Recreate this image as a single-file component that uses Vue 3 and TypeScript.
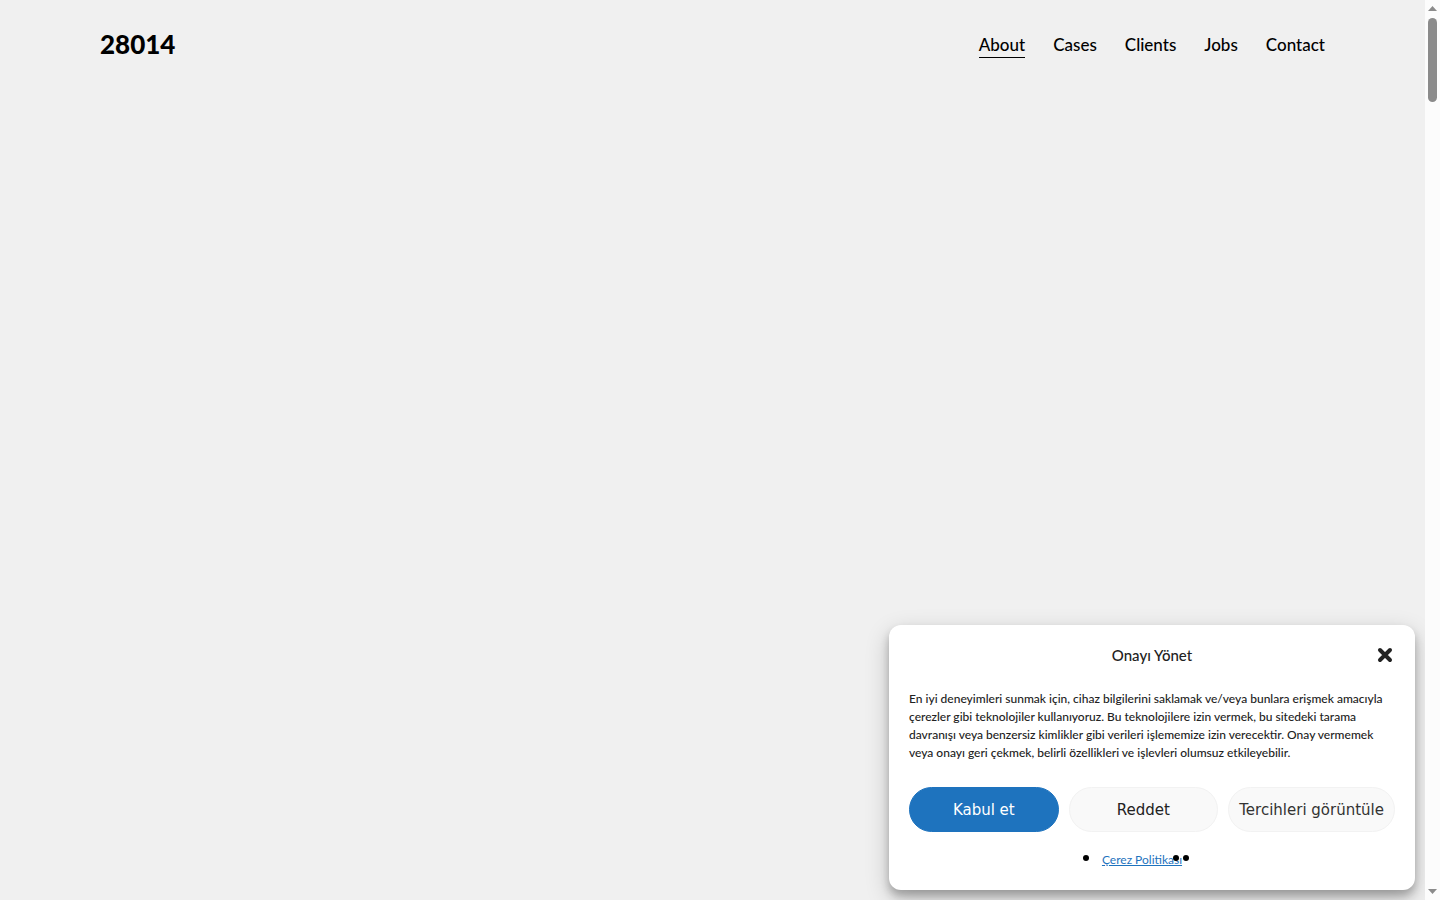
<script setup lang="ts">
import { ref } from 'vue'

interface NavItem {
  label: string
  href: string
}

const navItems: NavItem[] = [
  { label: 'About', href: '#about' },
  { label: 'Cases', href: '#cases' },
  { label: 'Clients', href: '#clients' },
  { label: 'Jobs', href: '#jobs' },
  { label: 'Contact', href: '#contact' },
]

const active = ref('About')
const consentOpen = ref(true)

const messageLines: string[] = [
  'En iyi deneyimleri sunmak için, cihaz bilgilerini saklamak ve/veya bunlara erişmek amacıyla',
  'çerezler gibi teknolojiler kullanıyoruz. Bu teknolojilere izin vermek, bu sitedeki tarama',
  'davranışı veya benzersiz kimlikler gibi verileri işlememize izin verecektir. Onay vermemek',
  'veya onayı geri çekmek, belirli özellikleri ve işlevleri olumsuz etkileyebilir.',
]

function closeConsent(): void {
  consentOpen.value = false
}
</script>

<template>
  <div class="window">
    <div class="page">
      <header class="header">
        <a class="logo" href="#home">28014</a>
        <nav class="nav">
          <a
            v-for="item in navItems"
            :key="item.label"
            :href="item.href"
            :class="['nav-link', { active: item.label === active }]"
            @click="active = item.label"
          >{{ item.label }}</a>
        </nav>
      </header>
      <main></main>

      <section v-if="consentOpen" class="consent" role="dialog" aria-labelledby="consent-title">
        <div class="consent-head">
          <h2 id="consent-title" class="consent-title">Onayı Yönet</h2>
          <button class="close" type="button" aria-label="Kapat" @click="closeConsent">
            <svg viewBox="0 0 20 20" width="20" height="20" aria-hidden="true">
              <path d="M5 5L15 15M15 5L5 15" />
            </svg>
          </button>
        </div>
        <p class="message">
          <span v-for="line in messageLines" :key="line" class="line">{{ line }}</span>
        </p>
        <div class="buttons">
          <button class="btn accept" type="button" @click="closeConsent">Kabul et</button>
          <button class="btn deny" type="button" @click="closeConsent">Reddet</button>
          <button class="btn" type="button">Tercihleri görüntüle</button>
        </div>
        <ul class="documents">
          <li><a href="#cerez-politikasi">Çerez Politikası</a></li>
          <li></li>
          <li></li>
        </ul>
      </section>
    </div>

    <div class="scrollbar" aria-hidden="true">
      <svg viewBox="0 0 9 5" width="9" height="5"><path d="M0 5L4.5 0L9 5Z" /></svg>
      <div class="track"><div class="thumb"></div></div>
      <svg viewBox="0 0 9 5" width="9" height="5"><path d="M0 0L4.5 5L9 0Z" /></svg>
    </div>
  </div>
</template>

<style>
body {
  margin: 0;
  background: #f0f0f0;
}
</style>

<style scoped>
.window {
  display: flex;
  min-height: 100vh;
  font-family: Lato, "Liberation Sans", sans-serif;
  color: #000;
}

.page {
  position: relative;
  flex: 1;
  overflow: hidden;
  background: #f0f0f0;
}

.header {
  display: flex;
  align-items: center;
  justify-content: space-between;
  padding: 30px 100px;
}

.logo {
  font-size: 26px;
  line-height: 28px;
  font-weight: 900;
  color: #000;
  text-decoration: none;
}

.nav {
  display: flex;
  gap: 28px;
}

.nav-link {
  padding-top: 2px;
  border-bottom: 1px solid transparent;
  font-size: 17px;
  line-height: 25px;
  font-weight: 500;
  color: #000;
  text-decoration: none;
}

.nav-link.active {
  border-bottom-color: #000;
}

.consent {
  position: absolute;
  right: 10px;
  bottom: 10px;
  box-sizing: border-box;
  width: 526px;
  max-width: calc(100% - 20px);
  padding: 20px;
  border-radius: 12px;
  background: #fff;
  box-shadow: 0 8px 24px rgba(0, 0, 0, 0.2), 0 6px 8px rgba(0, 0, 0, 0.24);
  color: #222;
}

.consent-head {
  display: grid;
  grid-template-columns: 20px 1fr 20px;
  align-items: center;
}

.consent-title {
  grid-column: 2;
  margin: 0;
  font-size: 15px;
  line-height: 20px;
  font-weight: 500;
  text-align: center;
}

.close {
  display: flex;
  padding: 0;
  border: 0;
  background: none;
  cursor: pointer;
}

.close path {
  fill: none;
  stroke: #222;
  stroke-width: 4;
  stroke-linecap: round;
}

.message {
  margin: 25px 0;
  font-size: 12px;
  line-height: 18px;
  font-weight: 500;
}

.line {
  display: block;
  white-space: nowrap;
}

.buttons {
  display: grid;
  grid-template-columns: 1fr 1fr auto;
  gap: 10px;
}

.btn {
  height: 45px;
  padding: 0 10px;
  border: 1px solid #f2f2f2;
  border-radius: 23px;
  background: #f9f9f9;
  font-family: "DejaVu Sans", sans-serif;
  font-size: 15px;
  color: #333;
  white-space: nowrap;
  cursor: pointer;
}

.btn.accept {
  border-color: #1e73be;
  background: #1e73be;
  color: #fff;
}

.btn.deny {
  color: #222;
}

.documents {
  display: flex;
  justify-content: center;
  gap: 10px;
  margin: 18px 0 0;
  padding: 0;
  list-style: none;
  font-size: 12px;
  line-height: 20px;
}

.documents li {
  position: relative;
}

.documents li::before {
  content: "";
  position: absolute;
  top: 5px;
  left: -19px;
  width: 6px;
  height: 6px;
  border-radius: 50%;
  background: #000;
}

.documents a {
  color: #1e73be;
  text-decoration: underline;
}

.scrollbar {
  display: flex;
  flex-direction: column;
  align-items: center;
  box-sizing: border-box;
  width: 15px;
  padding: 6px 0;
  background: #fcfcfc;
}

.scrollbar svg {
  fill: #8b8b8b;
}

.track {
  flex: 1;
  padding: 7px 0;
}

.thumb {
  width: 9px;
  height: 84px;
  border-radius: 5px;
  background: #8b8b8b;
}
</style>
